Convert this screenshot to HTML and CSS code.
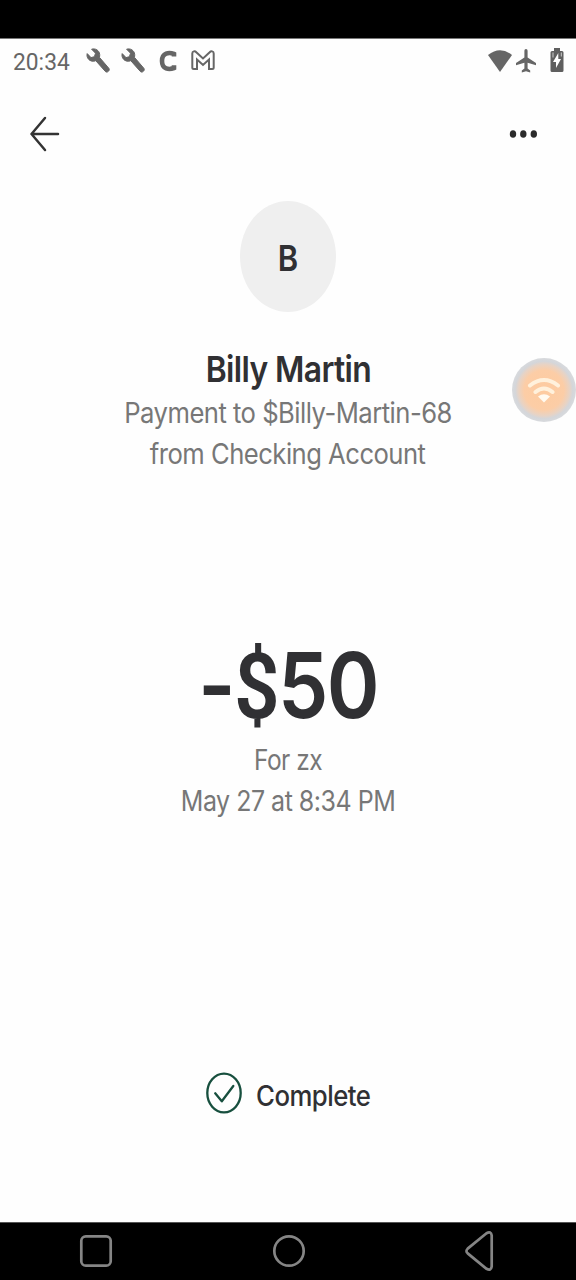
FILE: index.html
```html
<!DOCTYPE html>
<html lang="en">
<head>
<meta charset="utf-8">
<title>Payment details</title>
<link rel="stylesheet" href="styles.css">
</head>
<body>
<div class="phone">
  <div class="cutout"></div>
  <header class="status">
    <span class="clock"><span class="clock-text">20:34</span></span>
    <svg class="wrench" width="24" height="26" viewBox="0 0 24 26"><path d="M1.200 5.600 5 9.600 8.400 8.700 9.500 5.200 5.600 1.200C9.400 0 13.300 2.400 13.700 6.400c.1 1.200 0 2-.3 2.900l9.200 10.700c1 1.100.9 2.200-.2 3.300-1.100 1.100-2.300 1.100-3.300-.1L9.800 12.700C7 13.800 4.300 13.200 2.500 11.200 1 9.500.7 7.400 1.200 5.600Z"/></svg>
    <svg class="wrench" width="24" height="26" viewBox="0 0 24 26"><path d="M1.200 5.600 5 9.600 8.400 8.700 9.500 5.200 5.600 1.200C9.400 0 13.300 2.400 13.700 6.400c.1 1.200 0 2-.3 2.900l9.200 10.700c1 1.100.9 2.200-.2 3.300-1.100 1.100-2.300 1.100-3.300-.1L9.800 12.700C7 13.800 4.300 13.200 2.500 11.200 1 9.500.7 7.400 1.200 5.600Z"/></svg>
    <svg class="chime" width="18" height="22" viewBox="0 0 18 22"><path d="M15 6.400V4C10 2 3 2.700 3 11s7 9 12 7v-2.800" /></svg>
    <svg class="mail" width="24" height="22" viewBox="0 0 24 22"><path d="M1.300 3.500C1.300 1 4 .8 5.300 2.200L12 8.400l6.700-6.200C20 .8 22.700 1 22.700 3.500V17.500q0 1.500-1.500 1.500H18V9.600L12 15 6 9.600V19H2.800q-1.500 0-1.500-1.500Z"/></svg>
    <span class="grow"></span>
    <svg class="signal" width="24" height="24" viewBox="0 0 24 24"><path d="M0 6Q12-3.500 24 6L12 23Z"/></svg>
    <svg class="plane" width="20" height="24" viewBox="0 0 20 24"><path d="M10 0c1 0 1.600.8 1.600 2v6.400L20 14v2.200l-8.400-2.500v5.800l2.600 2V23.500L10 22.300 5.800 23.500V21.500l2.600-2v-5.800L0 16.200V14l8.400-5.600V2C8.400.8 9 0 10 0Z"/></svg>
    <svg class="battery" width="14" height="26" viewBox="0 0 14 26"><path fill="#5f5f5f" d="M4 1h6v3h2q1.500 0 1.500 1.500v18q0 1.500-1.500 1.500H2Q.5 25 .5 23.500v-18Q.5 4 2 4h2Z"/><path fill="#fff" d="M8.300 6 3 15h3v6l5-9H8.300Z"/><path d="M3 5.500v5M11.300 5.500v4" stroke="#ccc" stroke-width="1"/></svg>
  </header>
  <nav class="toolbar">
    <svg width="32" height="36" viewBox="0 0 32 36" class="back"><path d="M16 2 2.500 18 16 34M2.500 18H29"/></svg>
    <svg width="30" height="10" viewBox="0 0 30 10" class="more"><ellipse cx="4" cy="5" rx="3.200" ry="3.800"/><ellipse cx="14.300" cy="5" rx="3.200" ry="3.800"/><ellipse cx="24.800" cy="5" rx="3.200" ry="3.800"/></svg>
  </nav>
  <main class="details">
    <div class="avatar"><span class="initial">B</span></div>
    <h1 class="name"><span class="name-text">Billy Martin</span></h1>
    <p class="line"><span class="payee">Payment to $Billy-Martin-68</span></p>
    <p class="line"><span class="account">from Checking Account</span></p>
    <div class="amount"><span class="amount-text">-<span class="currency">$</span>50</span></div>
    <p class="line"><span class="memo">For zx</span></p>
    <p class="line"><span class="date">May 27 at 8:34 PM</span></p>
    <div class="state">
      <svg width="38" height="42" viewBox="0 0 38 42" class="check"><ellipse cx="19" cy="21" rx="16.700" ry="19.300"/><path d="m10.200 21.300 6.600 8L28.300 14"/></svg>
      <span class="state-text">Complete</span>
    </div>
  </main>
  <footer class="navbar">
    <svg width="34" height="34" viewBox="0 0 34 34"><rect x="2.300" y="2.300" width="29.400" height="29.400" rx="4.500"/></svg>
    <svg width="34" height="34" viewBox="0 0 34 34"><circle cx="17" cy="17" r="14.700"/></svg>
    <svg width="32" height="42" viewBox="0 0 32 42"><path d="M22.500 3.200 3.700 18.600q-2.500 2.400 0 4.800L22.500 38.800q4.500 2.400 5.200-2.300v-31Q27 .8 22.500 3.200Z"/></svg>
  </footer>
  <div class="bubble">
    <svg width="34" height="30" viewBox="0 0 34 30"><path d="M3 10.500Q17-.5 31 10.500M8.500 17Q17 10 25.500 17"/><path class="dot" d="M11 21.500Q17 17 23 21.500L17 27.500Z"/></svg>
  </div>
</div>
</body>
</html>
```
FILE: styles.css
```css
* { box-sizing: border-box; }
body { margin: 0; background: #fefefe; font-family: Inter, "Liberation Sans", sans-serif; color: #303033; }
.phone { position: relative; width: 576px; height: 1280px; display: flex; flex-direction: column; overflow: hidden; }
.cutout { height: 38px; background: #000; flex: none; }
h1, p { margin: 0; font-weight: 400; }
svg { display: block; flex: none; }

.status { height: 48px; padding: 0 12px 0 13px; display: flex; align-items: center; fill: #666; color: #666; border-top: 1px solid #777; }
.clock { width: 73px; font-family: Roboto, sans-serif; font-size: 24.5px; line-height: 48px; margin-top: -2px; }
.clock-text { display: inline-block; transform: scaleX(.93); transform-origin: left; }
.wrench { margin: -4px 11px 0 0; stroke: #666; stroke-width: 1; }
.wrench + .wrench { margin-right: 14px; }
.chime { fill: none; stroke: #666; stroke-width: 4.600; margin-top: -4px; }
.mail { fill: none; stroke: #666; stroke-width: 2; margin: -4px 0 0 14px; }
.grow { flex: 1; }
.signal, .plane { margin-top: -3px; }
.plane { margin-left: 4px; }
.battery { margin: -5px 0 0 14px; }

.toolbar { height: 96px; padding: 0 37px 0 29px; display: flex; justify-content: space-between; align-items: center; }
.back { fill: none; stroke: #333; stroke-width: 2.500; stroke-linecap: round; stroke-linejoin: round; }
.more { fill: #2b2b2b; }

.details { flex: 1; padding-top: 19px; text-align: center; }
.avatar { width: 96px; height: 111px; margin: 0 auto 34px; border-radius: 50%; background: #efefef; display: flex; align-items: center; justify-content: center; padding-top: 2px; font-size: 36px; font-weight: 600; }
.initial { transform: scaleX(.86); }
.name { font-size: 36px; font-weight: 600; line-height: 46px; white-space: nowrap; }
.name-text, .payee, .account, .memo, .date, .amount-text, .state-text { display: inline-block; white-space: nowrap; letter-spacing: -.02em; }
.name-text { transform: scaleX(.885); }
.line { height: 41px; font-size: 28px; line-height: 42px; color: #777; }
.payee, .account { transform: scaleX(.915); }
.memo { transform: scaleX(.875); }
.date { transform: scaleX(.893); }
.amount { margin-top: 156px; height: 109px; line-height: 110px; font-size: 91px; font-weight: 600; }
.amount-text { transform: scaleX(.88); }
.currency { font-family: Roboto, sans-serif; line-height: 1; }
.state { margin: 250px 0 0 205px; height: 44px; display: flex; align-items: center; font-size: 28px; font-weight: 500; }
.check { fill: none; stroke: #174f3e; stroke-width: 2.300; stroke-linecap: round; stroke-linejoin: round; margin-top: -1px; }
.state-text { margin: 5px 0 0 13px; transform: scaleX(.92); transform-origin: left; }

.navbar { height: 58px; background: #000; display: flex; align-items: center; justify-content: space-between; padding: 0 80px 1px 79px; fill: none; stroke: #858585; stroke-width: 2.700; border-top: 1px solid #555; flex: none; }

/* floating hotspot button above the page */
.bubble { position: absolute; left: 512px; top: 358px; width: 64px; height: 64px; border-radius: 50%; background: radial-gradient(circle closest-side, #fdcba0 0, #fccda6 62%, #e8d3c4 80%, #d4d6da 90%, #d8dadd 100%); display: flex; align-items: center; justify-content: center; }
.bubble svg { fill: none; stroke: #fff1dc; stroke-width: 4; stroke-linecap: round; }
.bubble .dot { fill: #fffaf0; stroke: none; }
```
